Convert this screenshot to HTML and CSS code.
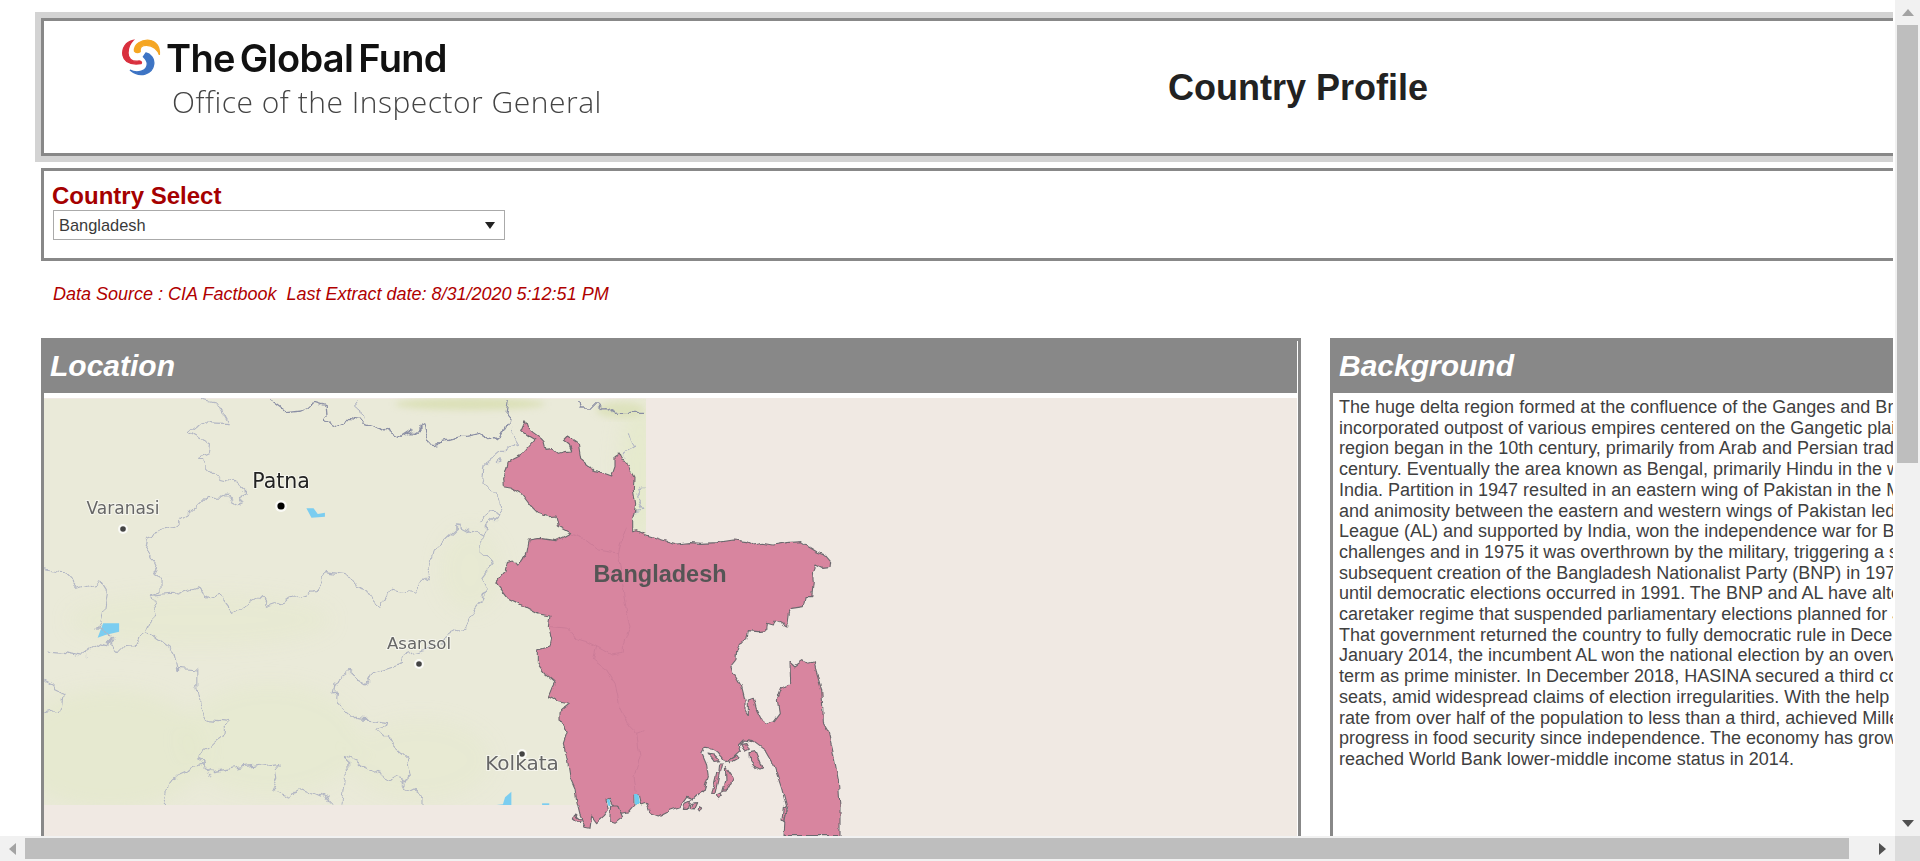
FILE: index.html
```html
<!DOCTYPE html>
<html lang="en">
<head>
<meta charset="utf-8">
<title>Country Profile</title>
<link rel="stylesheet" href="styles.css">
</head>
<body>
<div class="app">
  <main class="viewport">
    <div class="sheet">
      <header class="head-frame">
        <div class="head-inner">
          <div class="logo">
            <div class="logo-top">
              <svg class="swirl" viewBox="30 40 125 120" preserveAspectRatio="none" aria-hidden="true">
                <path fill="#d9303e" stroke="#d9303e" stroke-width="4" d="M68 44C45 48 32 70 36 92C40 112 60 122 92 118C98 112 90 108 82 110C62 112 52 100 52 84C52 66 58 54 68 44Z"/>
                <path fill="#f5a623" stroke="#f5a623" stroke-width="4" d="M72 78C70 55 95 42 118 44C140 46 152 66 150 90C145 75 130 60 110 60C95 60 88 66 90 80C84 84 76 84 72 78Z"/>
                <path fill="#3d74c4" stroke="#3d74c4" stroke-width="4" d="M108 84C120 86 136 100 132 122C128 150 90 165 58 138C80 150 112 142 112 118C112 108 104 100 100 96Z"/>
              </svg>
              <span class="logo-name">The Global Fund</span>
            </div>
            <div class="logo-sub">Office of the Inspector General</div>
          </div>
          <h1 class="page-title">Country Profile</h1>
        </div>
      </header>

      <section class="select-panel">
        <div class="select-label">Country Select</div>
        <div class="select-box"><span>Bangladesh</span><i class="select-arrow"></i></div>
      </section>

      <p class="source">Data Source : CIA Factbook&nbsp; Last Extract date: 8/31/2020 5:12:51 PM</p>

      <div class="panels">
        <section class="panel panel-location">
          <h2 class="panel-head">Location</h2>
          <svg class="map" viewBox="44 398 1253 438" preserveAspectRatio="none" role="img" aria-label="Map of Bangladesh">
            <defs>
              <clipPath id="tile"><rect x="44" y="398" width="602" height="407"/></clipPath>
              <filter id="soft" x="-20%" y="-20%" width="140%" height="140%"><feGaussianBlur stdDeviation="9"/></filter>
              <filter id="softer" x="-20%" y="-20%" width="140%" height="140%"><feGaussianBlur stdDeviation="3"/></filter>
              <filter id="wiggle" filterUnits="userSpaceOnUse" x="44" y="398" width="1253" height="438" color-interpolation-filters="sRGB">
                <feTurbulence type="fractalNoise" baseFrequency=".07" numOctaves="2" seed="4" result="n"/>
                <feDisplacementMap in="SourceGraphic" in2="n" scale="16" xChannelSelector="R" yChannelSelector="G"/>
              </filter>
              <filter id="wiggle-fine" filterUnits="userSpaceOnUse" x="44" y="398" width="1253" height="438" color-interpolation-filters="sRGB">
                <feTurbulence type="fractalNoise" baseFrequency=".12" numOctaves="2" seed="9" result="n"/>
                <feDisplacementMap in="SourceGraphic" in2="n" scale="5" xChannelSelector="R" yChannelSelector="G"/>
              </filter>
            </defs>
            <rect x="44" y="398" width="1253" height="438" fill="#f0e9e3"/>
            <g clip-path="url(#tile)">
              <rect x="44" y="399" width="602" height="406" fill="#eaead9"/>
              <g filter="url(#soft)" fill="#e5e9cd">
                <ellipse cx="110" cy="750" rx="95" ry="60" opacity=".8"/>
                <ellipse cx="270" cy="740" rx="90" ry="55" opacity=".6"/>
                <ellipse cx="200" cy="620" rx="130" ry="26" opacity=".5"/>
                <ellipse cx="420" cy="760" rx="70" ry="40" opacity=".5"/>
                <ellipse cx="470" cy="570" rx="30" ry="40" opacity=".5"/>
                <ellipse cx="640" cy="470" rx="20" ry="70"/>
              </g>
              <g filter="url(#softer)" fill="#dbe0b8">
                <ellipse cx="470" cy="404" rx="75" ry="6"/>
                <ellipse cx="620" cy="410" rx="24" ry="8" opacity=".8"/>
              </g>
              <g transform="translate(0,390) scale(.42088,.33333)" fill="#7bcdf0">
                <path d="M728 355H745L755 372L772 368V380L740 383Z"/>
                <path d="M245 700H283V725L250 735L232 743Z"/>
                <path d="M1215 1205L1200 1222L1195 1243L1180 1245H1215Z"/>
                <path d="M1288 1240H1305V1246H1288Z"/>
              </g>
              <g filter="url(#wiggle)">
                <g transform="translate(0,390) scale(.42088,.33333)">
                  <g class="line-state">
                    <path vector-effect="non-scaling-stroke" d="M480 28L515 40L540 95L485 92L452 125L500 158L498 190L472 205L510 258L550 270L590 315L560 335L535 318L490 320L440 380L400 415L358 440L350 490L385 580V612L362 622L372 655L350 720L320 770L280 775L258 750L205 797L150 785L108 780"/>
                    <path vector-effect="non-scaling-stroke" d="M362 622L420 615L470 590L490 625L520 610L555 670L612 620L632 650L680 630L750 600L775 545L830 555L850 595L880 605L905 652L930 598L985 610L1020 540L1030 480L1095 405L1140 435V480L1172 515L1145 560L1160 600L1140 650L1100 715L1050 760L970 790L960 820L890 850L875 885L830 850L800 875L795 925L850 985L920 995L900 1030L965 1105L975 1165L950 1180L1005 1215V1245"/>
                    <path vector-effect="non-scaling-stroke" d="M108 538L150 550L185 598L240 575L255 605L245 680L235 715L260 745"/>
                    <path vector-effect="non-scaling-stroke" d="M350 720L415 785L425 835L470 840V900L480 960L495 995L535 1000L530 1040L470 1100L480 1125L400 1170L388 1245"/>
                    <path vector-effect="non-scaling-stroke" d="M480 1125L510 1145L655 1115L660 1165L645 1205L690 1225L710 1190L790 1235H815L825 1160L820 1105L880 1140L960 1180"/>
                    <path vector-effect="non-scaling-stroke" d="M108 880L150 905L145 960L108 968"/>
                    <path vector-effect="non-scaling-stroke" d="M1140 435L1190 375L1165 365L1135 405M1190 375L1185 330L1145 270L1150 235L1210 170L1232 160L1210 115"/>
                    <path vector-effect="non-scaling-stroke" d="M1500 130L1510 170L1480 195M1533 285L1515 320L1530 355L1510 360M850 28L858 85"/>
                  </g>
                  <g class="line-nation">
                    <path vector-effect="non-scaling-stroke" d="M640 28L680 65L715 60L750 40L775 50L778 90L800 105L825 88L870 98L910 115L955 145L1005 105L1015 155L1040 158L1090 140L1145 125L1180 152L1200 110L1210 30"/>
                    <path vector-effect="non-scaling-stroke" d="M1370 30L1375 45L1425 45L1465 70H1533"/>
                  </g>
                </g>
              </g>
            </g>
            <g filter="url(#wiggle-fine)">
              <g transform="translate(480,390) scale(.33333)">
                <g class="land">
                  <path vector-effect="non-scaling-stroke" d="M135 92L142 112L160 128L180 142L192 155L198 178L215 176L232 190L250 185L275 183L268 165L250 150L262 138L280 150L295 160L298 180L302 205L325 225L340 242L360 245L395 258L405 230V200L418 192L425 210L440 215L450 240L462 262L460 300L467 345L458 385V425L472 422L500 435L540 448L590 462L630 458L665 460L710 458L760 450L800 455L820 465L850 460L880 465L920 458L965 455L985 470L1010 485L1035 495L1052 515L1050 532L1025 535L1005 525L997 545L1000 575L995 620L975 620L970 650L935 655L925 670L920 708L900 695L885 690L880 705L862 700L860 722L835 725L805 722L800 748L778 760L770 785L768 805L752 825L760 850L785 890L795 930V960L805 975V930L820 925L830 960L845 990L858 1000L880 992L898 968L892 930L905 895L932 880L930 815L945 828L968 812L985 820L1003 815L1010 850L1025 900L1028 945L1030 1000L1045 1025L1060 1090L1075 1170L1080 1250V1337H912L915 1290L922 1260L905 1195L880 1120L860 1085L820 1055L790 1050L775 1065L780 1085L750 1112L735 1115L715 1090L695 1075L675 1072L665 1090L680 1125L685 1160L672 1200L640 1230L620 1222L600 1250L570 1260L535 1278L510 1268L500 1240L485 1245L478 1215H462V1245L445 1265L425 1270L400 1245L388 1225L378 1230L385 1260L370 1280L350 1298L335 1278L330 1315L315 1312L300 1275L290 1235L285 1195L270 1160L262 1110L250 1060L262 1025L240 990V965L268 942L235 935L205 920L215 895L225 875L195 850L172 820V780L210 768L215 745L205 710L210 678L175 672L135 650L85 625L48 578L75 545L82 515L100 510L115 527L140 490L148 450L180 445L225 452L250 440L272 428L235 408L228 378L205 380L175 370L150 345L125 312L95 295L70 290L68 265L80 240L85 215L125 195L165 150L140 135L122 122Z"/>
                  <path vector-effect="non-scaling-stroke" d="M782 1060L798 1058L808 1078L795 1084Z"/>
                  <path vector-effect="non-scaling-stroke" d="M810 1088L826 1085L845 1130L830 1138L812 1115Z"/>
                  <path vector-effect="non-scaling-stroke" d="M684 1092L700 1095L718 1112L702 1114Z"/>
                  <path vector-effect="non-scaling-stroke" d="M716 1122L728 1122L722 1145L714 1142Z"/>
                  <path vector-effect="non-scaling-stroke" d="M710 1148L718 1150L705 1210L695 1212Z"/>
                  <path vector-effect="non-scaling-stroke" d="M712 1215L726 1208L730 1218L716 1226Z"/>
                  <path vector-effect="non-scaling-stroke" d="M736 1130L760 1165L742 1200L728 1205L738 1170Z"/>
                  <path vector-effect="non-scaling-stroke" d="M748 1110L770 1098L775 1105L752 1118Z"/>
                  <path vector-effect="non-scaling-stroke" d="M615 1240L632 1232L625 1258L610 1258Z"/>
                  <path vector-effect="non-scaling-stroke" d="M635 1240L650 1238L640 1260L630 1258Z"/>
                  <path vector-effect="non-scaling-stroke" d="M658 1250L665 1254L658 1266L654 1260Z"/>
                  <path vector-effect="non-scaling-stroke" d="M910 1252L918 1254L914 1296L906 1290Z"/>
                  <path vector-effect="non-scaling-stroke" d="M284 1275L302 1290L298 1298L280 1284Z"/>
                  <path vector-effect="non-scaling-stroke" d="M395 1245L412 1245L428 1282L405 1300L392 1295Z"/>
                </g>
                <g class="line-division">
                  <path vector-effect="non-scaling-stroke" d="M272 432L310 445L355 480L415 490L425 450L440 410"/>
                  <path vector-effect="non-scaling-stroke" d="M415 490L425 560L435 640L450 710L430 760V790L395 795L350 770L320 755L285 745L265 715L210 710"/>
                  <path vector-effect="non-scaling-stroke" d="M350 770L340 810L380 840L405 880L420 950L450 1010L470 1030L490 1022M470 1030L480 1100L462 1160L470 1215"/>
                </g>
                <g fill="#6fcbf0">
                  <path d="M462 1212H475L480 1245H465Z"/>
                  <path d="M380 1228H388L393 1245H386Z"/>
                </g>
              </g>
            </g>
            <g class="city-dots">
              <circle class="halo" cx="281" cy="506" r="6"/><circle cx="281" cy="506" r="3.6" fill="#000"/>
              <circle class="halo" cx="123" cy="529" r="5"/><circle cx="123" cy="529" r="2.8" fill="#444"/>
              <circle class="halo" cx="419" cy="664" r="5"/><circle cx="419" cy="664" r="2.8" fill="#444"/>
              <circle class="halo" cx="522" cy="754" r="5"/><circle cx="522" cy="754" r="2.8" fill="#444"/>
            </g>
            <text class="city city-major" x="281" y="488">Patna</text>
            <text class="city city-minor" x="123" y="514">Varanasi</text>
            <text class="city city-asansol" x="419" y="649">Asansol</text>
            <text class="city city-kolkata" x="522" y="770">Kolkata</text>
            <text class="country-label" x="660" y="582">Bangladesh</text>
          </svg>
        </section>

        <section class="panel panel-background">
          <h2 class="panel-head">Background</h2>
          <p class="panel-text">The huge delta region formed at the confluence of the Ganges and Brahmaputra River systems<br>
incorporated outpost of various empires centered on the Gangetic plain for much of the first<br>
region began in the 10th century, primarily from Arab and Persian traders and preachers<br>
century. Eventually the area known as Bengal, primarily Hindu in the western section<br>
India. Partition in 1947 resulted in an eastern wing of Pakistan in the Muslim-majority area<br>
and animosity between the eastern and western wings of Pakistan led to a Bengali independence<br>
League (AL) and supported by India, won the independence war for Bangladesh in 1971<br>
challenges and in 1975 it was overthrown by the military, triggering a series of military coups<br>
subsequent creation of the Bangladesh Nationalist Party (BNP) in 1978<br>
until democratic elections occurred in 1991. The BNP and AL have alternately held power<br>
caretaker regime that suspended parliamentary elections planned for January 2007<br>
That government returned the country to fully democratic rule in December 2008<br>
January 2014, the incumbent AL won the national election by an overwhelming majority<br>
term as prime minister. In December 2018, HASINA secured a third consecutive term<br>
seats, amid widespread claims of election irregularities. With the help of international<br>
rate from over half of the population to less than a third, achieved Millennium Development<br>
progress in food security since independence. The economy has grown<br>
reached World Bank lower-middle income status in 2014.</p>
        </section>
      </div>
    </div>
  </main>

  <div class="vbar">
    <div class="bar-btn"><i class="tri tri-up"></i></div>
    <div class="vtrack"><div class="vthumb"></div></div>
    <div class="bar-btn"><i class="tri tri-down"></i></div>
  </div>
  <div class="hbar">
    <div class="bar-btn"><i class="tri tri-left"></i></div>
    <div class="htrack"><div class="hthumb"></div></div>
    <div class="bar-btn"><i class="tri tri-right"></i></div>
  </div>
  <div class="corner"></div>
</div>
</body>
</html>
```

FILE: styles.css
```css
* { box-sizing: border-box; }
html, body { margin: 0; height: 100%; overflow: hidden; background: #fff; }
body { font-family: "Liberation Sans", Arial, sans-serif; color: #333; }

.app {
  display: grid;
  grid-template-columns: 1895px 25px;
  grid-template-rows: 836px 25px;
  width: 1920px;
  height: 861px;
}

/* clipped page */
.viewport { overflow: hidden; margin-right: 2px; background: #fff; }
.sheet { width: 2400px; padding: 12px 0 0 35px; }

.head-frame { background: #d3d3d3; padding: 6px 0 6px 6px; height: 150px; }
.head-inner {
  display: flex;
  align-items: flex-start;
  height: 138px;
  border: 3px solid #888;
  background: #fff;
  padding-left: 77px;
}
.logo { width: 490px; flex: none; padding-top: 18px; filter: blur(.35px); }
.logo-top { display: flex; align-items: center; height: 38px; }
.swirl { width: 40px; height: 38px; flex: none; }
.logo-name {
  margin-left: 5px;
  font-family: Inter, "Liberation Sans", sans-serif;
  font-weight: 600;
  font-size: 38px;
  line-height: 38px;
  letter-spacing: -.65px;
  word-spacing: -4px;
  color: #111;
  white-space: nowrap;
}
.logo-sub {
  margin: 7px 0 0 51px;
  font-family: "Open Sans", "Liberation Sans", sans-serif;
  font-weight: 300;
  font-size: 30px;
  line-height: 36px;
  letter-spacing: .5px;
  color: #444;
  white-space: nowrap;
}
.page-title {
  margin: 46px 0 0 557px;
  font-size: 36px;
  line-height: 41px;
  font-weight: 700;
  color: #222;
  white-space: nowrap;
}

.select-panel {
  height: 93px;
  margin: 6px 0 0 6px;
  border: 3px solid #888;
  padding: 11px 0 0 9px;
}
.select-label {
  font-size: 24px;
  line-height: 28px;
  font-weight: 700;
  color: #a50000;
  margin-left: -1px;
}
.select-box {
  display: flex;
  align-items: center;
  justify-content: space-between;
  width: 452px;
  height: 30px;
  border: 1px solid #aaa;
  background: #fff;
  padding: 0 9px 0 5px;
  font-size: 16.4px;
  color: #3a3a3a;
}
.select-arrow {
  width: 0;
  height: 0;
  border-left: 5px solid transparent;
  border-right: 5px solid transparent;
  border-top: 7px solid #222;
}

.source {
  margin: 23px 0 0 18px;
  font-size: 18px;
  line-height: 21px;
  font-style: italic;
  color: #b00000;
  white-space: nowrap;
}

.panels {
  display: flex;
  gap: 29px;
  margin: 33px 0 0 6px;
}
.panel {
  height: 640px;
  border: 3px solid #888;
  flex: none;
}
.panel-location { width: 1260px; }
.panel-background { width: 900px; }
.panel-head {
  margin: 0 1px 0 0;
  height: 52px;
  background: #888;
  color: #fff;
  font-size: 30px;
  line-height: 50px;
  font-weight: 700;
  font-style: italic;
  padding-left: 6px;
}
.panel-background .panel-head { padding-left: 6px; margin-right: 0; }
.map { display: block; width: 1253px; height: 438px; margin-top: 5px; }
.panel-text {
  margin: 4px 0 0 6px;
  font-size: 18px;
  line-height: 20.7px;
  color: #404040;
  white-space: nowrap;
}

/* map drawing */
.line-state path, .line-nation path, .line-division path { fill: none; }
.line-state path { stroke: #b1b5c3; stroke-width: 1.1; stroke-linejoin: round; }
.line-nation path { stroke: #8a8ea4; stroke-width: 1.3; stroke-linejoin: round; }
.line-division path { stroke: #bd7290; stroke-width: 1; opacity: .45; }
.land path { fill: #d8859f; stroke: #6c686e; stroke-width: 1.1; stroke-linejoin: round; }
.halo { fill: #fff; opacity: .75; }
.city {
  font-family: "DejaVu Sans", sans-serif;
  text-anchor: middle;
  paint-order: stroke;
  stroke: #fff;
  stroke-opacity: .55;
  stroke-width: 2px;
}
.city-major { font-size: 20.5px; fill: #222; }
.city-minor { font-size: 17px; fill: #666; }
.city-asansol { font-size: 16.6px; fill: #666; }
.city-kolkata { font-size: 20px; fill: #666; }
.country-label {
  font-family: "Liberation Sans", sans-serif;
  font-size: 23.5px;
  font-weight: 700;
  fill: #555;
  text-anchor: middle;
}

/* scrollbars */
.vbar { display: flex; flex-direction: column; background: #f1f1f1; }
.hbar { display: flex; background: #f1f1f1; padding-top: 2px; padding-bottom: 2px; }
.corner { background: #dcdcdc; }
.bar-btn { flex: none; width: 25px; height: 25px; display: flex; align-items: center; justify-content: center; }
.hbar .bar-btn { height: 21px; }
.vtrack { flex: 1; padding: 0 2px; }
.vthumb { height: 438px; background: #bebebe; }
.htrack { flex: 1; }
.hthumb { width: 1824px; height: 21px; background: #bebebe; }
.tri { width: 0; height: 0; display: block; }
.tri-up { border-left: 6px solid transparent; border-right: 6px solid transparent; border-bottom: 7px solid #a3a3a3; }
.tri-down { border-left: 6px solid transparent; border-right: 6px solid transparent; border-top: 7px solid #505050; }
.tri-left { border-top: 6px solid transparent; border-bottom: 6px solid transparent; border-right: 7px solid #a3a3a3; }
.tri-right { border-top: 6px solid transparent; border-bottom: 6px solid transparent; border-left: 7px solid #505050; }
```
